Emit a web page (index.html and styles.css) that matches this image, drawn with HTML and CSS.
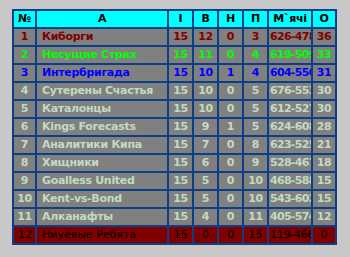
FILE: index.html
```html
<!DOCTYPE html>
<html>
<head>
<meta charset="utf-8">
<link rel="stylesheet" href="styles.css">
</head>
<body>
<div class="wrap">
<table class="standings">
<colgroup>
<col class="c-n"><col class="c-a"><col class="c-s"><col class="c-s"><col class="c-s"><col class="c-s"><col class="c-m"><col class="c-o">
</colgroup>
<thead>
<tr><th>№</th><th>А</th><th>І</th><th>В</th><th>Н</th><th>П</th><th>М`ячі</th><th>О</th></tr>
</thead>
<tbody>
<tr class="r1"><td>1</td><td class="name">Киборги</td><td>15</td><td>12</td><td>0</td><td>3</td><td class="m">626-478</td><td>36</td></tr>
<tr class="r2"><td>2</td><td class="name">Несущие Страх</td><td>15</td><td>11</td><td>0</td><td>4</td><td class="m">619-509</td><td>33</td></tr>
<tr class="r3"><td>3</td><td class="name">Интербригада</td><td>15</td><td>10</td><td>1</td><td>4</td><td class="m">604-550</td><td>31</td></tr>
<tr><td>4</td><td class="name">Сутерены Счастья</td><td>15</td><td>10</td><td>0</td><td>5</td><td class="m">676-553</td><td>30</td></tr>
<tr><td>5</td><td class="name">Каталонцы</td><td>15</td><td>10</td><td>0</td><td>5</td><td class="m">612-527</td><td>30</td></tr>
<tr><td>6</td><td class="name">Kings Forecasts</td><td>15</td><td>9</td><td>1</td><td>5</td><td class="m">624-608</td><td>28</td></tr>
<tr><td>7</td><td class="name">Аналитики Кипа</td><td>15</td><td>7</td><td>0</td><td>8</td><td class="m">623-525</td><td>21</td></tr>
<tr><td>8</td><td class="name">Хищники</td><td>15</td><td>6</td><td>0</td><td>9</td><td class="m">528-467</td><td>18</td></tr>
<tr><td>9</td><td class="name">Goalless United</td><td>15</td><td>5</td><td>0</td><td>10</td><td class="m">468-588</td><td>15</td></tr>
<tr><td>10</td><td class="name">Kent-vs-Bond</td><td>15</td><td>5</td><td>0</td><td>10</td><td class="m">543-602</td><td>15</td></tr>
<tr><td>11</td><td class="name">Алканафты</td><td>15</td><td>4</td><td>0</td><td>11</td><td class="m">405-574</td><td>12</td></tr>
<tr class="last"><td class="num">12</td><td class="name">Ниуёвые Ребята</td><td>15</td><td>0</td><td>0</td><td>15</td><td class="m">119-466</td><td>0</td></tr>
</tbody>
</table>
</div>
</body>
</html>
```

FILE: styles.css
```css
html, body {
  margin: 0;
  padding: 0;
  background: #c8c8c8;
}
.wrap {
  padding: 9px 0 0 12px;
}
.standings {
  table-layout: fixed;
  width: 325px;
  border-collapse: separate;
  border-spacing: 0;
  border: 1px solid #0b3f86;
  font-family: "DejaVu Sans", Verdana, sans-serif;
  font-size: 11px;
  font-weight: bold;
  letter-spacing: -0.3px;
}
.c-n { width: 23px; }
.c-a { width: 132px; }
.c-s { width: 25px; }
.c-m { width: 44px; }
.c-o { width: 24px; }
.standings th,
.standings td {
  border: 1px solid #0b3f86;
  height: 16px;
  padding: 0;
  text-align: center;
  white-space: nowrap;
  overflow: hidden;
  line-height: 16px;
  box-sizing: content-box;
}
.standings th {
  background: #00ffff;
  color: #000;
}
.standings td {
  background: #808080;
  color: #c0dcc0;
}
.standings td.name {
  text-align: left;
  padding-left: 5px;
}
.standings td.m {
  text-align: left;
  padding-left: 1px;
  letter-spacing: -0.7px;
}
.r1 td { color: #800000; }
.r2 td { color: #00ff00; }
.r3 td { color: #0000ff; }
.last td {
  background: #800000;
  color: #000;
  font-weight: normal;
  letter-spacing: 0;
}
.last td.m {
  letter-spacing: -0.3px;
}
.last td.num {
  text-align: right;
  padding-right: 3px;
}
```
